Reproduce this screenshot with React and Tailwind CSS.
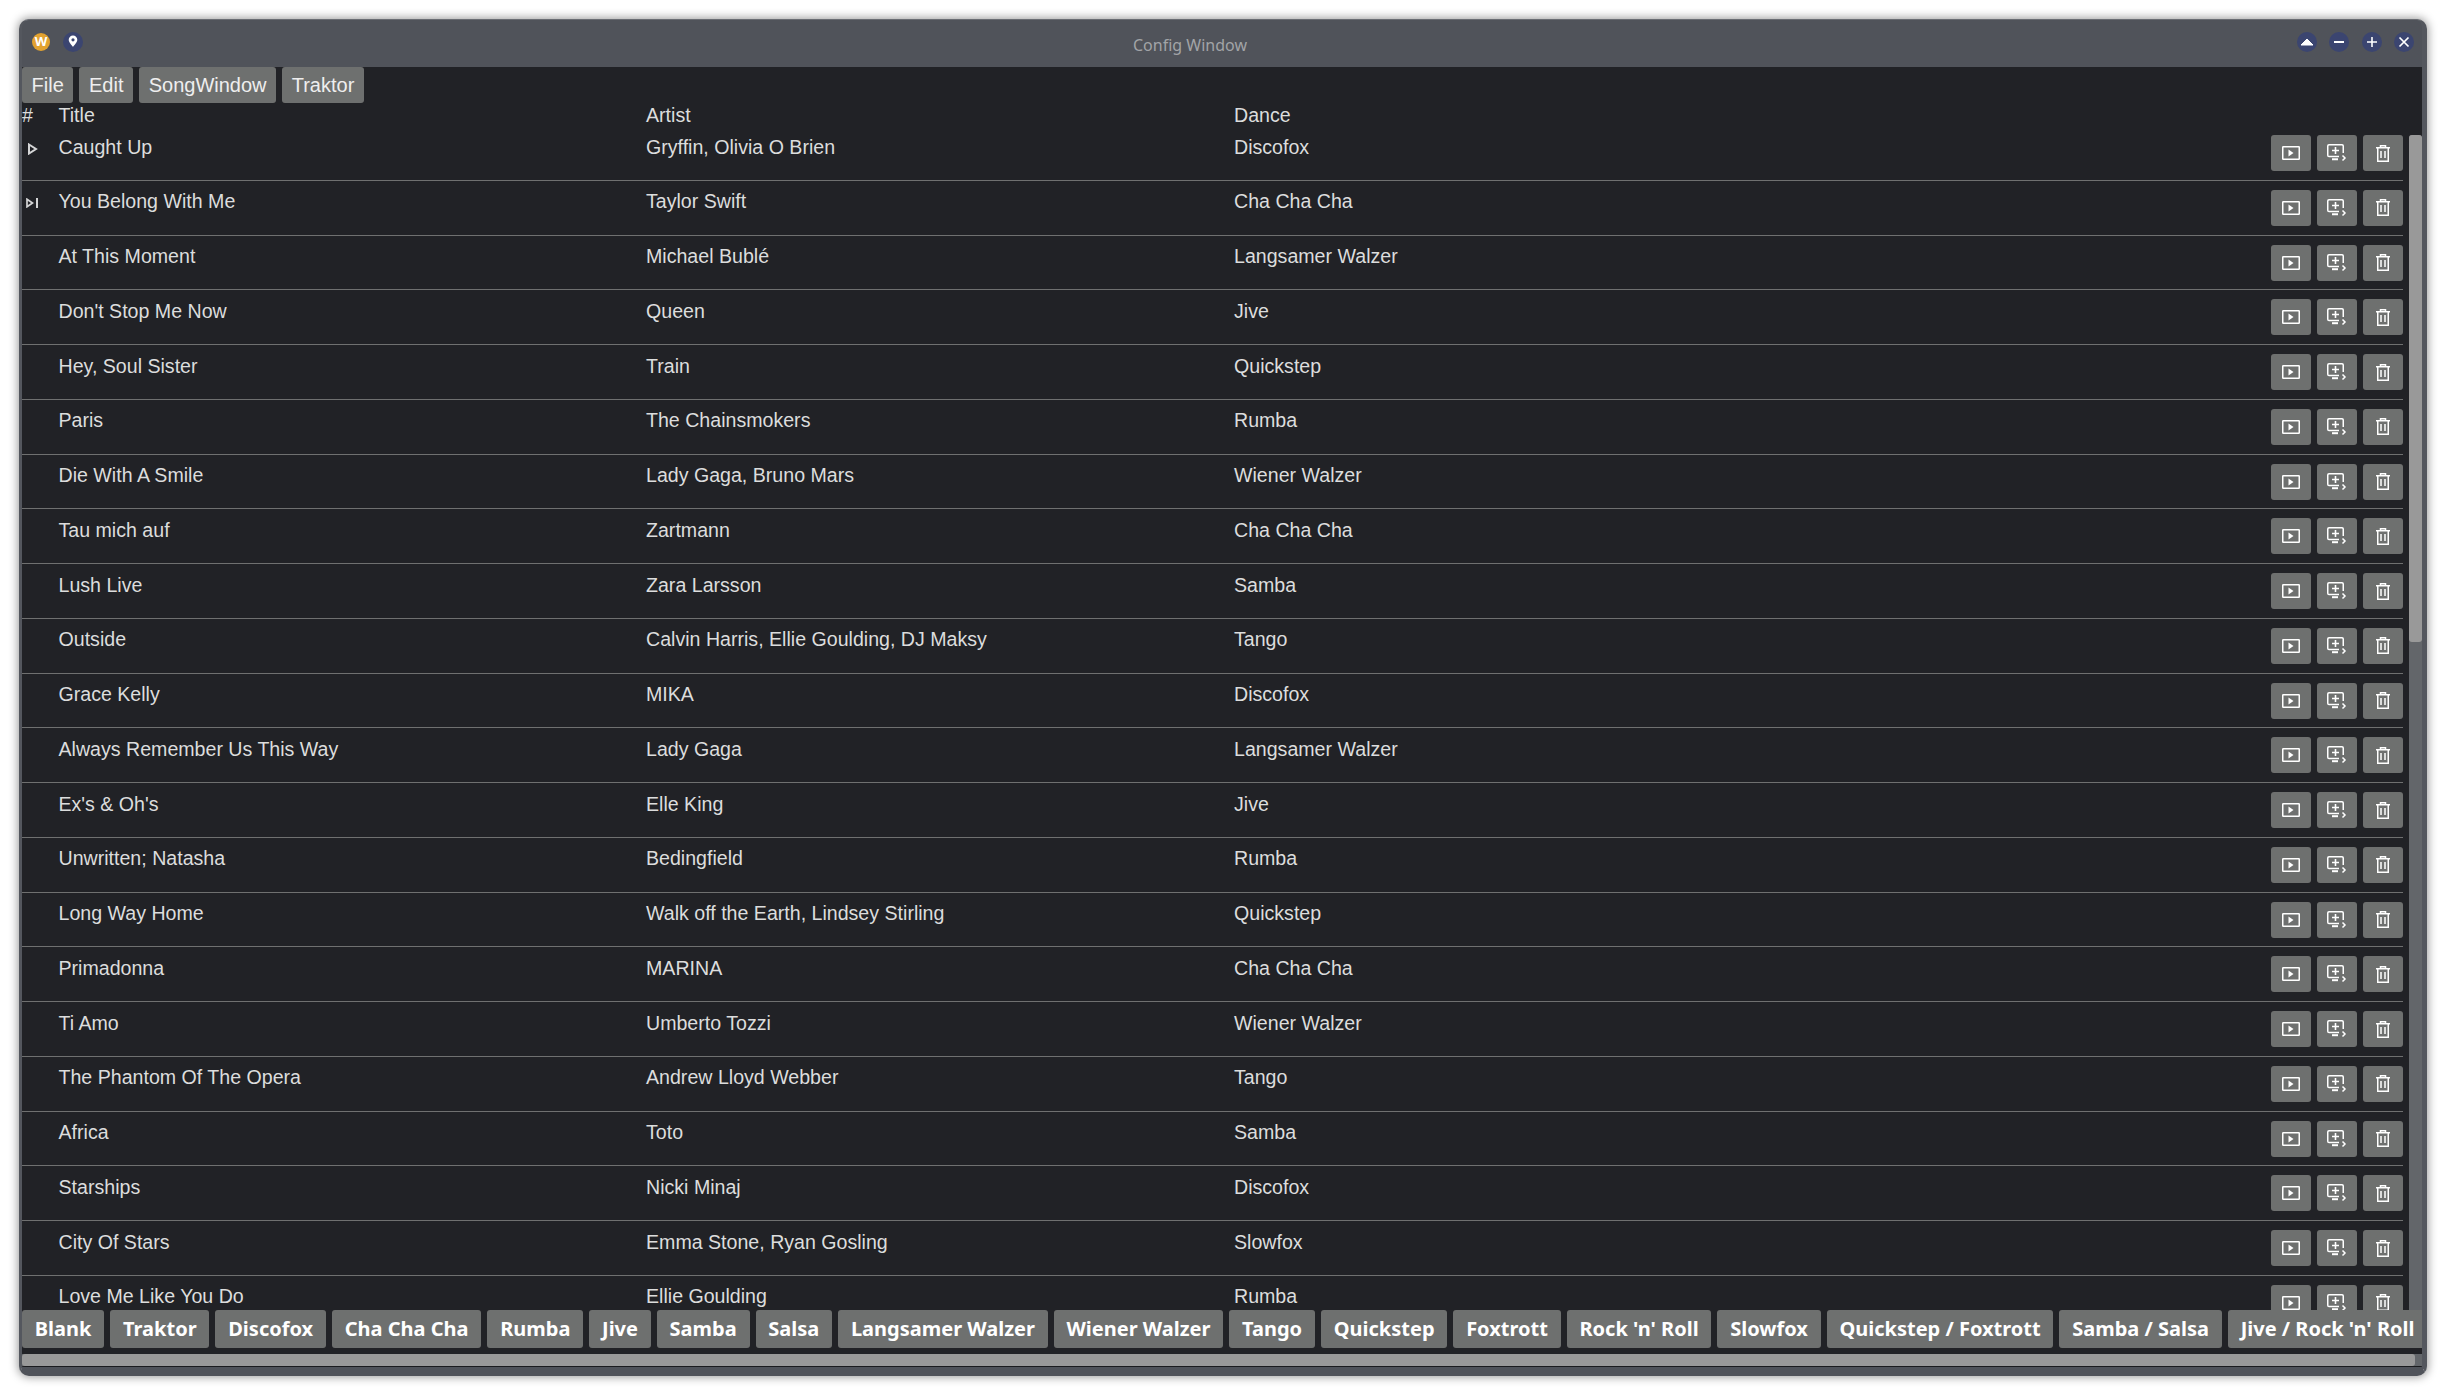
const songs = [
  ["Caught Up", "Gryffin, Olivia O Brien", "Discofox"],
  ["You Belong With Me", "Taylor Swift", "Cha Cha Cha"],
  ["At This Moment", "Michael Bublé", "Langsamer Walzer"],
  ["Don't Stop Me Now", "Queen", "Jive"],
  ["Hey, Soul Sister", "Train", "Quickstep"],
  ["Paris", "The Chainsmokers", "Rumba"],
  ["Die With A Smile", "Lady Gaga, Bruno Mars", "Wiener Walzer"],
  ["Tau mich auf", "Zartmann", "Cha Cha Cha"],
  ["Lush Live", "Zara Larsson", "Samba"],
  ["Outside", "Calvin Harris, Ellie Goulding, DJ Maksy", "Tango"],
  ["Grace Kelly", "MIKA", "Discofox"],
  ["Always Remember Us This Way", "Lady Gaga", "Langsamer Walzer"],
  ["Ex's & Oh's", "Elle King", "Jive"],
  ["Unwritten; Natasha", "Bedingfield", "Rumba"],
  ["Long Way Home", "Walk off the Earth, Lindsey Stirling", "Quickstep"],
  ["Primadonna", "MARINA", "Cha Cha Cha"],
  ["Ti Amo", "Umberto Tozzi", "Wiener Walzer"],
  ["The Phantom Of The Opera", "Andrew Lloyd Webber", "Tango"],
  ["Africa", "Toto", "Samba"],
  ["Starships", "Nicki Minaj", "Discofox"],
  ["City Of Stars", "Emma Stone, Ryan Gosling", "Slowfox"],
  ["Love Me Like You Do", "Ellie Goulding", "Rumba"],
];

const tabs = [
  "Blank", "Traktor", "Discofox", "Cha Cha Cha", "Rumba", "Jive", "Samba", "Salsa",
  "Langsamer Walzer", "Wiener Walzer", "Tango", "Quickstep", "Foxtrott", "Rock 'n' Roll",
  "Slowfox", "Quickstep / Foxtrott", "Samba / Salsa", "Jive / Rock 'n' Roll",
];

const menus = ["File", "Edit", "SongWindow", "Traktor"];

function PlayBoxIcon() {
  return (
    <svg width="18" height="14" viewBox="0 0 18 14" fill="none" stroke="white" strokeWidth="1.5">
      <rect x="0.75" y="0.75" width="16.5" height="12.5" rx="0.5" />
      <path d="M6.5 3.5 L11.5 7 L6.5 10.5 Z" fill="white" stroke="none" />
    </svg>
  );
}

function AddScreenIcon() {
  return (
    <svg width="20" height="18" viewBox="0 0 20 18" fill="none" stroke="white" strokeWidth="1.5">
      <path d="M12 12.5 H2 Q0.75 12.5 0.75 11.2 V1.9 Q0.75 0.75 2 0.75 H15 Q16.25 0.75 16.25 1.9 V9" />
      <path d="M8.5 3 V10 M5 6.5 H12" strokeWidth="1.6" />
      <path d="M5 15.2 H11" strokeWidth="2" />
      <path d="M15.5 11.5 L18 14 L15.5 16.5" />
    </svg>
  );
}

function TrashIcon() {
  return (
    <svg width="14" height="17" viewBox="0 0 14 17" fill="none" stroke="white" strokeWidth="1.5">
      <path d="M0 2.75 H14" />
      <path d="M4.5 2.5 V0.75 H9.5 V2.5" />
      <path d="M1.75 2.75 V16.25 H12.25 V2.75" />
      <path d="M5 6 V13 M9 6 V13" />
    </svg>
  );
}

function PlayingMark() {
  return (
    <svg width="10" height="12" viewBox="0 0 10 12" fill="none" stroke="#d4d5d6" strokeWidth="2">
      <path d="M1 1.5 L8 6 L1 10.5 Z" strokeLinejoin="miter" />
    </svg>
  );
}

function NextMark() {
  return (
    <svg width="12" height="10" viewBox="0 0 12 10" fill="none" stroke="#d4d5d6" strokeWidth="1.7">
      <path d="M1 1.2 L6.5 5 L1 8.8 Z" />
      <path d="M11 0 V10" strokeWidth="2" />
    </svg>
  );
}

function RoundButton({ children }) {
  return (
    <div className="w-5 h-5 rounded-full bg-[#3b4570] flex items-center justify-center">{children}</div>
  );
}

function RowButton({ children }) {
  return (
    <div className="w-10 h-9 rounded-[3px] bg-[#6e706f] flex items-center justify-center">{children}</div>
  );
}

function SongRow({ song, index }) {
  return (
    <div className="h-[54.75px] shrink-0 flex border-b border-[#6f7070] pt-[9px]">
      <div className="w-[36.5px] shrink-0 h-6 flex items-center">
        {index === 0 && <div className="ml-[6px] mt-[3px]"><PlayingMark /></div>}
        {index === 1 && <div className="ml-[4px] mt-[2px]"><NextMark /></div>}
      </div>
      <div className="w-[587.5px] shrink-0 leading-6 -mt-[0.3px]">{song[0]}</div>
      <div className="w-[588px] shrink-0 leading-6 -mt-[0.3px]">{song[1]}</div>
      <div className="flex-1 leading-6 -mt-[0.3px]">{song[2]}</div>
      <div className="flex gap-1.5 h-9">
        <RowButton><PlayBoxIcon /></RowButton>
        <RowButton><AddScreenIcon /></RowButton>
        <RowButton><TrashIcon /></RowButton>
      </div>
    </div>
  );
}

export default function App() {
  return (
    <div className="w-[2443px] h-[1393px] bg-white overflow-hidden pt-[19px] pl-[19px] font-['Liberation_Sans',sans-serif]">
      <div className="w-[2408px] h-[1357px] flex flex-col rounded-[10px] bg-[#50535a] border-l-[3px] border-r-[5px] border-t border-b-[9px] border-x-[#54575e] border-t-[#6a6d73] border-b-[#50535a] shadow-[0_0_10px_1px_rgba(0,0,0,0.4)] overflow-hidden">
        {/* title bar */}
        <div className="h-[47px] shrink-0 flex items-center justify-between pl-[10px] pr-[8px] relative">
          <div className="flex items-center gap-[13px] -mt-[4px]">
            <div className="w-[18px] h-[18px] rounded-full bg-[#e2a230] flex items-center justify-center text-white text-[13px] font-bold font-['Noto_Sans',sans-serif]">
              W
            </div>
            <RoundButton>
              <svg width="10" height="13" viewBox="0 0 10 13">
                <path d="M5 0.5 A4.3 4.3 0 0 1 9.3 4.8 C9.3 7.5 6 10.5 5 12 C4 10.5 0.7 7.5 0.7 4.8 A4.3 4.3 0 0 1 5 0.5 Z M5 3.2 A1.6 1.6 0 1 0 5 6.4 A1.6 1.6 0 1 0 5 3.2 Z" fill="white" fillRule="evenodd" />
              </svg>
            </RoundButton>
          </div>
          <div className="absolute left-[1168px] -translate-x-1/2 top-[15px] text-[16px] leading-5 text-[#a2a4a7] font-['Noto_Sans',sans-serif]">
            Config Window
          </div>
          <div className="flex items-center gap-[12.5px] -mt-[4px]">
            <RoundButton>
              <svg width="14" height="8" viewBox="0 0 14 8"><path d="M7 1 L13 7 H1 Z" fill="white" stroke="white" strokeLinejoin="round" /></svg>
            </RoundButton>
            <RoundButton>
              <svg width="12" height="12" viewBox="0 0 12 12"><path d="M1 6 H11" stroke="white" strokeWidth="2" /></svg>
            </RoundButton>
            <RoundButton>
              <svg width="12" height="12" viewBox="0 0 12 12"><path d="M1 6 H11 M6 1 V11" stroke="white" strokeWidth="1.6" /></svg>
            </RoundButton>
            <RoundButton>
              <svg width="12" height="12" viewBox="0 0 12 12"><path d="M1.5 1.5 L10.5 10.5 M10.5 1.5 L1.5 10.5" stroke="white" strokeWidth="1.7" /></svg>
            </RoundButton>
          </div>
        </div>

        {/* window body */}
        <div className="flex-1 min-h-0 flex flex-col bg-[#212226] text-[19.6px] text-[#dcdddd]">
          <div className="h-9 shrink-0 flex gap-1.5">
            {menus.map((m) => (
              <div key={m} className="h-9 px-[9.6px] pb-[1px] rounded-[3px] bg-[#6e706f] flex items-center text-[20px] text-[#eeeeee]">{m}</div>
            ))}
          </div>
          <div className="h-[23px] shrink-0 flex leading-6">
            <div className="w-[36.5px] shrink-0">#</div>
            <div className="w-[587.5px] shrink-0">Title</div>
            <div className="w-[588px] shrink-0">Artist</div>
            <div>Dance</div>
          </div>
          <div className="flex-1 min-h-0 flex">
            <div className="flex-1 min-w-0 overflow-hidden flex flex-col">
              {songs.map((song, i) => (
                <SongRow key={song[0]} song={song} index={i} />
              ))}
            </div>
            <div className="w-[13px] ml-[6px] mt-[9px] shrink-0 bg-[#63666a] rounded-t-[3px]">
              <div className="h-[507px] bg-[#999999] rounded-[3px]" />
            </div>
          </div>
          <div className="h-[38px] shrink-0 flex gap-1.5 overflow-hidden">
            {tabs.map((t) => (
              <div key={t} className="h-[38px] shrink-0 px-[12.8px] rounded-[3px] bg-[#6e706f] flex items-center font-bold text-white font-['Noto_Sans',sans-serif] text-[20px]">
                {t}
              </div>
            ))}
          </div>
          <div className="h-[6px] shrink-0" />
          <div className="h-[12px] shrink-0 bg-[#63666a]">
            <div className="h-full w-[2393px] bg-[#999999] rounded-[3px]" />
          </div>
          <div className="h-px shrink-0 bg-[#1a1b1e]" />
        </div>
      </div>
    </div>
  );
}
